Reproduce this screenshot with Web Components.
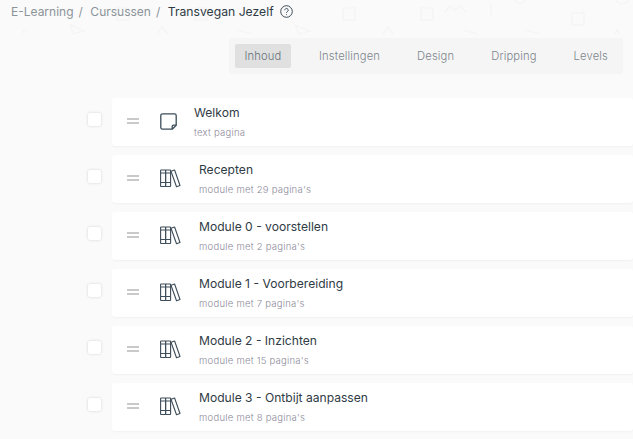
<!DOCTYPE html>
<html>
<head>
<meta charset="utf-8">
<style>
  html, body { margin: 0; height: 100%; overflow: hidden; }
  body { background: #fafafa; font-family: "Inter", "Lato", sans-serif; color: #2f3b45; }
</style>
</head>
<body>
<lesson-page>
  <page-crumbs slot="head">
    <span>E-Learning</span>
    <span>Cursussen</span>
    <b>Transvegan Jezelf</b>
  </page-crumbs>
  <tab-bar slot="head">
    <tab-item active>Inhoud</tab-item>
    <tab-item>Instellingen</tab-item>
    <tab-item>Design</tab-item>
    <tab-item>Dripping</tab-item>
    <tab-item>Levels</tab-item>
  </tab-bar>
  <lesson-row kind="page" name="Welkom" meta="text pagina"></lesson-row>
  <lesson-row kind="module" name="Recepten" meta="module met 29 pagina's"></lesson-row>
  <lesson-row kind="module" name="Module 0 - voorstellen" meta="module met 2 pagina's"></lesson-row>
  <lesson-row kind="module" name="Module 1 - Voorbereiding" meta="module met 7 pagina's"></lesson-row>
  <lesson-row kind="module" name="Module 2 - Inzichten" meta="module met 15 pagina's"></lesson-row>
  <lesson-row kind="module" name="Module 3 - Ontbijt aanpassen" meta="module met 8 pagina's"></lesson-row>
</lesson-page>
<script>
const ICONS = {
  page: `<svg width="17" height="17" viewBox="0 0 17 17" fill="none" stroke="#3d4d59" stroke-width="1.300" stroke-linejoin="round"><path d="M2.500 .8h12a1.700 1.700 0 0 1 1.700 1.700v9.700l-4 4H2.500A1.700 1.700 0 0 1 .8 14.500V2.500A1.700 1.700 0 0 1 2.500 .8z"/><path d="M16.200 12.200h-2.700a1.300 1.300 0 0 0-1.300 1.300v2.700"/></svg>`,
  module: `<svg width="21" height="19" viewBox="0 0 21 19" fill="none" stroke="#3d4d59" stroke-width="1.100" stroke-linejoin="round"><rect x=".6" y="1" width="5" height="16.500" rx=".6"/><rect x="5.600" y="1" width="5" height="16.500" rx=".6"/><path d="M.6 4h10M.6 13.500h10"/><path d="M11 2.200l3.600-1.200 5.400 15.500-3.500 1.200z"/></svg>`
};

class LessonPage extends HTMLElement {
  constructor() {
    super();
    this.attachShadow({mode: 'open'}).innerHTML = `
      <style>
        :host { display: block; position: relative; height: 439px; overflow: hidden; }
        #pattern { position: absolute; left: 0; top: 0; }
        #inner { position: relative; }
        #rows { display: flex; flex-direction: column; gap: 9px; padding: 24px 0 0 88px; }
      </style>
      <svg id="pattern" width="633" height="40" fill="none" stroke="#f4f4f4" stroke-width="1.200">
        <rect x="117" y="8" width="12" height="12"/>
        <rect x="195" y="8" width="12" height="12"/>
        <rect x="343" y="8" width="12" height="12"/>
        <rect x="421" y="8" width="12" height="12"/>
        <rect x="572" y="13" width="12" height="12"/>
        <path d="M445 12l5-6 5 4 5-4 6 6M491 4v13"/>
        <circle cx="520" cy="-3" r="6"/>
        <circle cx="622" cy="-3" r="7"/>
        <path d="M22 33q2-3 5-3M70 25l14 6-11 3zM157 34l5-7 6 7M237 30l15 4M295 25l15 6-11 3zM383 34l5-7 5 7M463 30l15 4M525 30l15 4M615 34l2-4 3 4"/>
      </svg>
      <div id="inner">
        <slot name="head"></slot>
        <div id="rows"><slot></slot></div>
      </div>`;
  }
}
customElements.define('lesson-page', LessonPage);

class PageCrumbs extends HTMLElement {
  constructor() {
    super();
    this.attachShadow({mode: 'open'}).innerHTML = `
      <style>
        :host { display: flex; align-items: center; height: 22px; padding-left: 11px; font-size: 12px; color: #8b9499; }
        ::slotted(*) { font-weight: 400; }
        ::slotted(span)::after { content: "/"; margin: 0 7.500px 0 5px; }
        ::slotted(b) { color: #2f3b45; font-size: 12.200px; }
        svg { margin-left: 6px; }
      </style>
      <slot></slot>
      <svg width="13" height="13" viewBox="0 0 13 13" fill="none" stroke="#3d4d59"><circle cx="6.500" cy="6.500" r="5.800"/><path d="M4.800 5.200a1.700 1.700 0 1 1 2.600 1.400c-.6.400-.9.700-.9 1.300"/><path d="M6.500 9.300v.8"/></svg>`;
  }
}
customElements.define('page-crumbs', PageCrumbs);

class TabBar extends HTMLElement {
  constructor() {
    super();
    this.attachShadow({mode: 'open'}).innerHTML = `
      <style>
        :host { display: flex; gap: 19px; box-sizing: border-box; width: 394px; height: 36px; margin: 16px 0 0 229px; padding: 6px; background: #f5f5f5; border-radius: 3px; }
      </style>
      <slot></slot>`;
  }
}
customElements.define('tab-bar', TabBar);

class TabItem extends HTMLElement {
  constructor() {
    super();
    this.attachShadow({mode: 'open'}).innerHTML = `
      <style>
        :host { display: flex; align-items: center; height: 24px; padding: 0 9px; font-size: 11.200px; font-weight: 300; letter-spacing: .15px; color: #7d868c; border-radius: 2px; }
        :host([active]) { box-sizing: border-box; width: 56px; justify-content: center; padding: 0; background: #e0e0e0; color: #66717a; }
      </style>
      <slot></slot>`;
  }
}
customElements.define('tab-item', TabItem);

class LessonRow extends HTMLElement {
  constructor() {
    super();
    const kind = this.getAttribute('kind');
    this.attachShadow({mode: 'open'}).innerHTML = `
      <style>
        :host { display: flex; align-items: flex-start; }
        #check { width: 13px; height: 13px; flex: none; background: #fff; border-radius: 2px; box-shadow: 0 0 3px rgba(0,0,0,.16); margin: 15px 11px 0 0; }
        #card { display: flex; align-items: center; width: 600px; height: 48px; background: #fff; border-radius: 3px; box-shadow: 0 1px 2px rgba(0,0,0,.04); }
        #grip { width: 12px; height: 6px; margin: 0 21px 2px 15px; border-top: 2px solid #c9c9c9; border-bottom: 2px solid #c9c9c9; box-sizing: border-box; }
        #icon { display: flex; width: 22px; margin: 0 ${kind === 'page' ? 12 : 17}px 2px 0; }
        #text { margin-bottom: 1px; }
        #name { font-size: 12.100px; color: #2f3b45; margin-bottom: 7px; }
        #meta { font-size: 9.500px; font-weight: 300; letter-spacing: .25px; color: #8d8a9a; }
      </style>
      <div id="check"></div>
      <div id="card">
        <div id="grip"></div>
        <div id="icon">${ICONS[kind]}</div>
        <div id="text">
          <div id="name"></div>
          <div id="meta"></div>
        </div>
      </div>`;
    this.shadowRoot.querySelector('#name').textContent = this.getAttribute('name');
    this.shadowRoot.querySelector('#meta').textContent = this.getAttribute('meta');
  }
}
customElements.define('lesson-row', LessonRow);
</script>
</body>
</html>
